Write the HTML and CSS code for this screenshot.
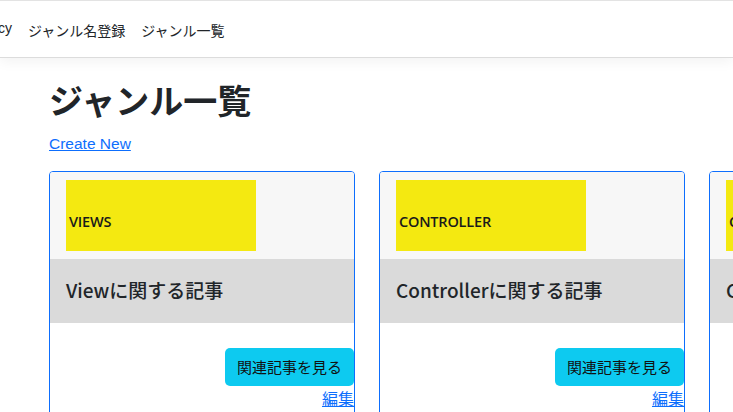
FILE: index.html
```html
<!DOCTYPE html>
<html lang="ja">
<head>
    <meta charset="UTF-8">
    <meta name="viewport" content="width=device-width, initial-scale=1.0">
    <title>ジャンル一覧</title>
    <link rel="stylesheet" href="styles.css">
</head>
<body>
    <header class="navbar">
        <nav class="nav-links">
            <a class="nav-link nav-first" href="#">Privacy</a>
            <a class="nav-link" href="#">ジャンル名登録</a>
            <a class="nav-link" href="#">ジャンル一覧</a>
        </nav>
    </header>

    <main class="container">
        <h1>ジャンル一覧</h1>
        <p class="create"><a href="#">Create New</a></p>

        <div class="card-row">
            <div class="card">
                <div class="card-img">
                    <div class="thumb"><span>VIEWS</span></div>
                </div>
                <div class="card-title">Viewに関する記事</div>
                <div class="card-body">
                    <a class="btn-info" href="#">関連記事を見る</a>
                    <a class="edit" href="#">編集</a>
                </div>
            </div>
            <div class="card">
                <div class="card-img">
                    <div class="thumb"><span>CONTROLLER</span></div>
                </div>
                <div class="card-title">Controllerに関する記事</div>
                <div class="card-body">
                    <a class="btn-info" href="#">関連記事を見る</a>
                    <a class="edit" href="#">編集</a>
                </div>
            </div>
            <div class="card">
                <div class="card-img">
                    <div class="thumb"><span>CONTROLLER</span></div>
                </div>
                <div class="card-title">Controllerに関する記事</div>
                <div class="card-body">
                    <a class="btn-info" href="#">関連記事を見る</a>
                    <a class="edit" href="#">編集</a>
                </div>
            </div>
        </div>
    </main>
</body>
</html>
```

FILE: styles.css
```css
html, body {
    overflow: hidden;
}
body {
    font-family: "Noto Sans CJK JP", "Noto Sans", sans-serif;
    margin: 0;
    color: #212529;
    background: #fff;
}
a {
    color: #0d6efd;
}
.navbar {
    height: 56px;
    border-top: 1px solid #e3e3e3;
    border-bottom: 1px solid #dcdcdc;
    box-shadow: 0 4px 12px rgba(0,0,0,0.05);
    display: flex;
    align-items: center;
}
.nav-links {
    display: flex;
    gap: 16px;
    margin-left: -34px;
    padding-top: 2px;
}
.nav-link {
    color: #212529;
    text-decoration: none;
    font-size: 14px;
    font-family: "Liberation Sans", "Noto Sans CJK JP", sans-serif;
}
.container {
    padding-left: 49px;
}
h1 {
    font-size: 34px;
    font-weight: 700;
    line-height: 1.2;
    margin: 22px 0 14px;
}
.create {
    margin: 0 0 18px;
    font-family: "Liberation Sans", sans-serif;
    font-size: 15.5px;
}
.card-row {
    display: flex;
    gap: 24px;
}
.card {
    flex: 0 0 306px;
    box-sizing: border-box;
    border: 1px solid #0d6efd;
    border-radius: 4px;
    overflow: hidden;
    height: 250px;
}
.card-img {
    background: #f7f7f7;
    padding: 8px 16px;
}
.thumb {
    width: 190px;
    height: 71px;
    background: #f4e911;
    box-sizing: border-box;
    padding: 28px 0 0 3px;
}
.thumb span {
    font-family: "Open Sans", sans-serif;
    font-size: 14.5px;
    font-weight: 600;
    color: #1a1a1a;
    letter-spacing: -0.2px;
}
.card-title {
    background: #dadada;
    padding: 16px 16px 18px;
    font-size: 19px;
    font-weight: 500;
    line-height: 30px;
}
.card-body {
    display: flex;
    flex-direction: column;
    align-items: flex-end;
    padding-top: 25px;
}
.btn-info {
    background: #0dcaf0;
    color: #111;
    text-decoration: none;
    font-size: 15px;
    line-height: 24px;
    padding: 7px 12px;
    border-radius: 5px;
}
.edit {
    margin-top: 2px;
    font-size: 16px;
    line-height: 20px;
}
```
